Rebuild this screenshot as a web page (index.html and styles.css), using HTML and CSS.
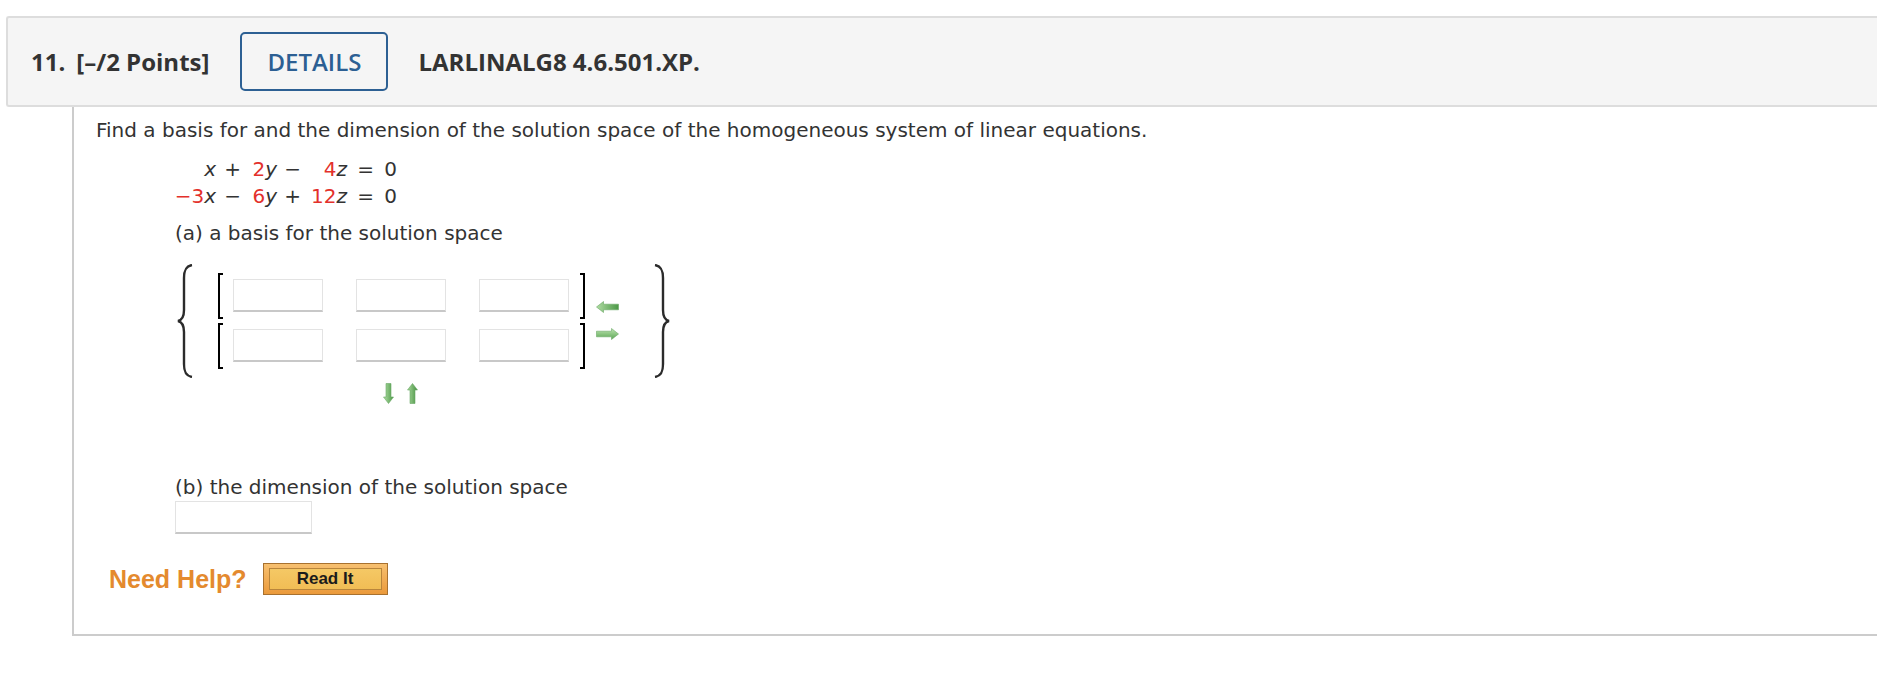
FILE: index.html
```html
<!DOCTYPE html>
<html>
<head>
<meta charset="utf-8">
<link rel="stylesheet" href="styles.css">
</head>
<body>
<div class="page">
  <div class="qhead">
    <span class="qnum">11.</span>
    <span class="points">[–/2 Points]</span>
    <span class="details">DETAILS</span>
    <span class="code">LARLINALG8 4.6.501.XP.</span>
  </div>
  <div class="qbody">
    <p class="prompt">Find a basis for and the dimension of the solution space of the homogeneous system of linear equations.</p>
    <div class="indent">
      <div class="eqs">
        <span><i>x</i></span><span>+</span><span><span class="c">2</span><i>y</i></span><span>−</span><span><span class="c">4</span><i>z</i></span><span>=</span><span>0</span>
        <span><span class="c">−3</span><i>x</i></span><span>−</span><span><span class="c">6</span><i>y</i></span><span>+</span><span><span class="c">12</span><i>z</i></span><span>=</span><span>0</span>
      </div>
      <p class="part">(a) a basis for the solution space</p>
      <div class="matrix">
        <svg class="brace" width="16" height="114" viewBox="0 0 16 114"><path d="M15 1 C9 2 7 6 7 14 L7 46 C7 53 5 56 1 57 C5 58 7 61 7 68 L7 100 C7 108 9 112 15 113" fill="none" stroke="#2b2b2b" stroke-width="2.4"/></svg>
        <div class="rows">
          <div class="row">
            <span class="bl"></span>
            <span class="box"></span><span class="box"></span><span class="box"></span>
            <span class="br"></span>
          </div>
          <div class="row">
            <span class="bl"></span>
            <span class="box"></span><span class="box"></span><span class="box"></span>
            <span class="br"></span>
          </div>
        </div>
        <div class="harrows">
          <svg width="23" height="12" viewBox="0 0 23 12"><defs><linearGradient id="gl" x1="0" y1="0" x2="1" y2="0"><stop offset="0" stop-color="#b0dca3"/><stop offset="1" stop-color="#4b9846"/></linearGradient></defs><path d="M0.5 6 L7.5 0.5 L7.5 3.2 L22.5 3.2 L22.5 8.8 L7.5 8.8 L7.5 11.5 Z" fill="url(#gl)" stroke="#6aa865" stroke-width="0.6"/></svg>
          <svg width="23" height="12" viewBox="0 0 23 12"><defs><linearGradient id="gr" x1="0" y1="0" x2="0" y2="1"><stop offset="0" stop-color="#bde5b1"/><stop offset="1" stop-color="#5aa553"/></linearGradient></defs><path d="M22.5 6 L15.5 0.5 L15.5 3.2 L0.5 3.2 L0.5 8.8 L15.5 8.8 L15.5 11.5 Z" fill="url(#gr)" stroke="#6aa865" stroke-width="0.6"/></svg>
        </div>
        <svg class="brace rbrace" width="16" height="114" viewBox="0 0 16 114"><path d="M1 1 C7 2 9 6 9 14 L9 46 C9 53 11 56 15 57 C11 58 9 61 9 68 L9 100 C9 108 7 112 1 113" fill="none" stroke="#2b2b2b" stroke-width="2.4"/></svg>
      </div>
      <div class="varrows">
        <svg width="11" height="21" viewBox="0 0 11 21"><defs><linearGradient id="gd" x1="0" y1="0" x2="1" y2="0"><stop offset="0" stop-color="#b2dfa6"/><stop offset="1" stop-color="#4b9846"/></linearGradient></defs><path d="M5.5 20.5 L0.5 14 L3 14 L3 0.5 L8 0.5 L8 14 L10.5 14 Z" fill="url(#gd)" stroke="#6aa865" stroke-width="0.6"/></svg>
        <svg width="11" height="21" viewBox="0 0 11 21"><defs><linearGradient id="gu" x1="0" y1="0" x2="1" y2="0"><stop offset="0" stop-color="#a9d99c"/><stop offset="1" stop-color="#458f40"/></linearGradient></defs><path d="M5.5 0.5 L0.5 7 L3 7 L3 20.5 L8 20.5 L8 7 L10.5 7 Z" fill="url(#gu)" stroke="#6aa865" stroke-width="0.6"/></svg>
      </div>
      <p class="part partb">(b) the dimension of the solution space</p>
      <span class="box wide"></span>
    </div>
    <div class="help">
      <span class="needhelp">Need Help?</span>
      <span class="readit"><span class="readit-in">Read It</span></span>
    </div>
  </div>
</div>
</body>
</html>
```

FILE: styles.css
```css
html, body {
  margin: 0;
  padding: 0;
  background: #ffffff;
}

body {
  font-family: "DejaVu Sans", Verdana, sans-serif;
  color: #333333;
  overflow: hidden;
}

.page {
  padding: 16px 0 0 6px;
}

.qhead {
  display: flex;
  align-items: center;
  height: 87px;
  border: 2px solid #dddddd;
  border-right: 0;
  border-radius: 3px 0 0 3px;
  background: #f5f5f5;
  padding-left: 23px;
  font-family: "Open Sans", "DejaVu Sans", sans-serif;
  font-size: 24px;
  font-weight: 700;
  color: #333333;
}

.qnum {
  margin-right: 11px;
}

.points {
  margin-right: 31px;
}

.details {
  display: flex;
  align-items: center;
  box-sizing: border-box;
  height: 59px;
  padding: 0 25px;
  border: 2px solid #2d6093;
  border-radius: 5px;
  color: #2c5f93;
  font-weight: 600;
}

.code {
  margin-left: 30px;
}

.qbody {
  margin-left: 66px;
  border-left: 2px solid #cccccc;
  border-bottom: 2px solid #cccccc;
  padding: 11px 0 39px 22px;
}

.prompt {
  margin: 0;
  font-size: 20px;
  line-height: 24px;
}

.indent {
  padding-left: 79px;
}

.eqs {
  display: grid;
  grid-template-columns: 41px 25px 36px 24px 46px 27px 23px;
  justify-items: end;
  width: max-content;
  margin-top: 13.5px;
  font-size: 20px;
  line-height: 27px;
}

.eqs i {
  font-style: italic;
}

.c {
  color: #e3302b;
}

.part {
  margin: 11.5px 0 0;
  font-size: 20px;
  line-height: 24px;
}

.matrix {
  display: flex;
  align-items: center;
  margin-top: 19px;
  padding-left: 2px;
}

.brace {
  display: block;
  flex: none;
}

.rows {
  display: flex;
  flex-direction: column;
  gap: 4px;
  margin-left: 25px;
}

.row {
  display: flex;
  align-items: center;
  height: 46px;
}

.bl, .br {
  box-sizing: border-box;
  width: 5px;
  height: 46px;
  border: 2px solid #000000;
}

.bl {
  border-right: 0;
}

.br {
  border-left: 0;
  margin-left: 11px;
}

.row .box {
  margin-left: 33px;
  margin-top: -1px;
}

.row .bl + .box {
  margin-left: 10px;
}

.box {
  display: block;
  box-sizing: border-box;
  width: 90px;
  height: 33px;
  border: 1px solid #e3e3e3;
  border-bottom: 2px solid #c8c8c8;
  background: #ffffff;
}

.harrows {
  display: flex;
  flex-direction: column;
  gap: 15px;
  margin-left: 11px;
  margin-top: -1px;
}

.harrows svg {
  display: block;
}

.rbrace {
  margin-left: 35px;
}

.varrows {
  display: flex;
  gap: 13px;
  margin: 5px 0 0 208px;
}

.varrows svg {
  display: block;
}

.partb {
  margin-top: 71px;
}

.box.wide {
  width: 137px;
  margin-top: 2px;
}

.help {
  display: flex;
  align-items: center;
  height: 32px;
  margin: 29px 0 0 13px;
}

.needhelp {
  font-family: "Liberation Sans", Arial, sans-serif;
  font-size: 25px;
  font-weight: 700;
  line-height: 32px;
  color: #e48a2e;
}

.readit {
  display: block;
  box-sizing: border-box;
  width: 125px;
  height: 32px;
  margin-left: 16px;
  padding: 4px 5px;
  border: 1px solid #a8712f;
  background: linear-gradient(#f7c070, #eb9a3b);
}

.readit-in {
  display: flex;
  align-items: center;
  justify-content: center;
  box-sizing: border-box;
  height: 22px;
  border: 1px solid #b9853b;
  background: linear-gradient(#f5c865, #f1bd55);
  font-family: "Liberation Sans", Arial, sans-serif;
  font-size: 17px;
  font-weight: 700;
  color: #1b1b1b;
}
```
